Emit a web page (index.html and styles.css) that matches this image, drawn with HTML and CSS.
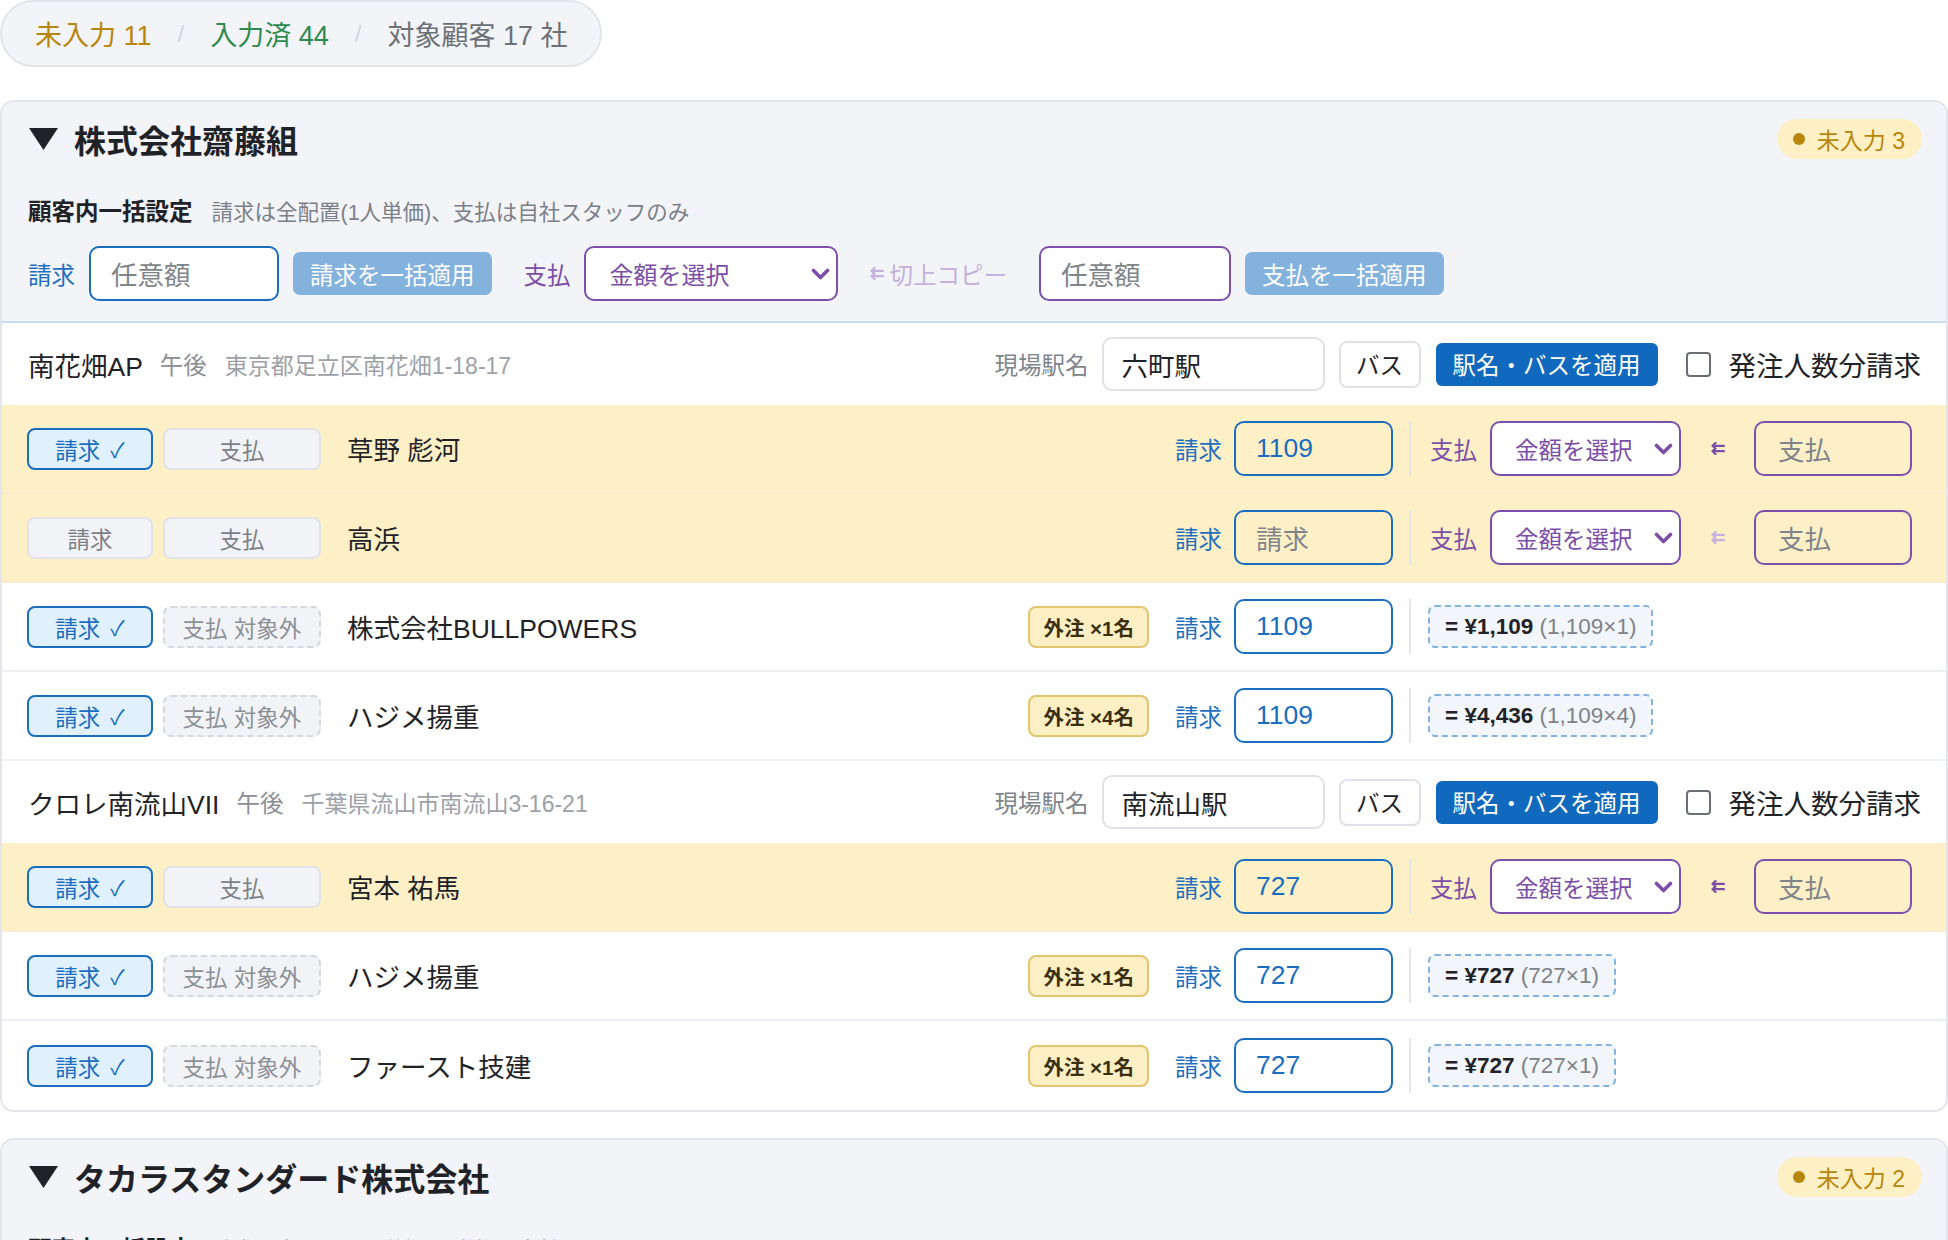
FILE: index.html
```html
<!DOCTYPE html>
<html lang="ja">
<head>
<meta charset="utf-8">
<title>請求・支払入力</title>
<link rel="stylesheet" href="styles.css">
</head>
<body>
<div class="page">
  <div class="summary">
    <span class="sum-pending">未入力 11</span>
    <span class="sum-sep">/</span>
    <span class="sum-done">入力済 44</span>
    <span class="sum-sep">/</span>
    <span class="sum-total">対象顧客 17 社</span>
  </div>

  <section class="customer">
    <div class="cust-head">
      <div class="cust-title-row">
        <h2 class="cust-title"><svg class="tri" width="29" height="22" viewBox="0 0 29 22"><polygon points="0,0 29,0 14.5,22"/></svg>株式会社齋藤組</h2>
        <span class="pending-badge"><span class="dot"></span>未入力 3</span>
      </div>
      <div class="bulk-caption"><b>顧客内一括設定</b><span>請求は全配置(1人単価)、支払は自社スタッフのみ</span></div>
      <div class="bulk-controls">
        <div class="bulk-group">
          <span class="lbl bill">請求</span>
          <div class="field bill-field bulk-field"><span class="ph">任意額</span></div>
          <button class="btn-soft">請求を一括適用</button>
        </div>
        <div class="bulk-group tight">
          <span class="lbl pay">支払</span>
          <div class="select bulk-select"><span>金額を選択</span><svg class="chev" width="19" height="12" viewBox="0 0 19 12"><path d="M2.5 2.5 L9.5 9.5 L16.5 2.5"/></svg></div>
        </div>
        <span class="copy-up"><svg class="dbl" width="14" height="13" viewBox="0 0 14 13"><path d="M4.5 1 L1.5 3.8 L4.5 6.6 M1.5 3.8 H13 M4.5 6.4 L1.5 9.2 L4.5 12 M1.5 9.2 H13"/></svg>切上コピー</span>
        <div class="bulk-group">
          <div class="field pay-field bulk-field"><span class="ph">任意額</span></div>
          <button class="btn-soft">支払を一括適用</button>
        </div>
      </div>
    </div>

    <div class="site-row">
      <span class="site-name">南花畑AP</span>
      <span class="site-time">午後</span>
      <span class="site-addr">東京都足立区南花畑1-18-17</span>
      <div class="site-tools">
        <span class="site-lbl">現場駅名</span>
        <div class="station">六町駅</div>
        <button class="btn-bus">バス</button>
        <button class="btn-apply">駅名・バスを適用</button>
        <label class="chk"><span class="box"></span>発注人数分請求</label>
      </div>
    </div>

    <div class="worker pending">
      <span class="toggle bill on">請求<span class="tick">✓</span></span>
      <span class="toggle pay">支払</span>
      <span class="worker-name">草野 彪河</span>
      <span class="lbl bill">請求</span>
      <div class="amount">1109</div>
      <span class="vsep"></span>
      <div class="pay-part">
        <span class="lbl pay">支払</span>
        <div class="select row-select"><span>金額を選択</span><svg class="chev" width="19" height="12" viewBox="0 0 19 12"><path d="M2.5 2.5 L9.5 9.5 L16.5 2.5"/></svg></div>
        <span class="copy-arrow"><svg class="dbl" width="14" height="13" viewBox="0 0 14 13"><path d="M4.5 1 L1.5 3.8 L4.5 6.6 M1.5 3.8 H13 M4.5 6.4 L1.5 9.2 L4.5 12 M1.5 9.2 H13"/></svg></span>
        <div class="payin"><span class="ph">支払</span></div>
      </div>
    </div>

    <div class="worker pending">
      <span class="toggle bill">請求</span>
      <span class="toggle pay">支払</span>
      <span class="worker-name">高浜</span>
      <span class="lbl bill">請求</span>
      <div class="amount"><span class="ph">請求</span></div>
      <span class="vsep"></span>
      <div class="pay-part">
        <span class="lbl pay">支払</span>
        <div class="select row-select"><span>金額を選択</span><svg class="chev" width="19" height="12" viewBox="0 0 19 12"><path d="M2.5 2.5 L9.5 9.5 L16.5 2.5"/></svg></div>
        <span class="copy-arrow dim"><svg class="dbl" width="14" height="13" viewBox="0 0 14 13"><path d="M4.5 1 L1.5 3.8 L4.5 6.6 M1.5 3.8 H13 M4.5 6.4 L1.5 9.2 L4.5 12 M1.5 9.2 H13"/></svg></span>
        <div class="payin"><span class="ph">支払</span></div>
      </div>
    </div>

    <div class="worker">
      <span class="toggle bill on">請求<span class="tick">✓</span></span>
      <span class="toggle pay off">支払 対象外</span>
      <span class="worker-name">株式会社BULLPOWERS</span>
      <span class="outsource">外注 ×1名</span>
      <span class="lbl bill">請求</span>
      <div class="amount">1109</div>
      <span class="vsep"></span>
      <div class="pay-part">
        <span class="result"><b>= ¥1,109</b> (1,109×1)</span>
      </div>
    </div>

    <div class="worker">
      <span class="toggle bill on">請求<span class="tick">✓</span></span>
      <span class="toggle pay off">支払 対象外</span>
      <span class="worker-name">ハジメ揚重</span>
      <span class="outsource">外注 ×4名</span>
      <span class="lbl bill">請求</span>
      <div class="amount">1109</div>
      <span class="vsep"></span>
      <div class="pay-part">
        <span class="result"><b>= ¥4,436</b> (1,109×4)</span>
      </div>
    </div>

    <div class="site-row">
      <span class="site-name">クロレ南流山VII</span>
      <span class="site-time">午後</span>
      <span class="site-addr">千葉県流山市南流山3-16-21</span>
      <div class="site-tools">
        <span class="site-lbl">現場駅名</span>
        <div class="station">南流山駅</div>
        <button class="btn-bus">バス</button>
        <button class="btn-apply">駅名・バスを適用</button>
        <label class="chk"><span class="box"></span>発注人数分請求</label>
      </div>
    </div>

    <div class="worker pending">
      <span class="toggle bill on">請求<span class="tick">✓</span></span>
      <span class="toggle pay">支払</span>
      <span class="worker-name">宮本 祐馬</span>
      <span class="lbl bill">請求</span>
      <div class="amount">727</div>
      <span class="vsep"></span>
      <div class="pay-part">
        <span class="lbl pay">支払</span>
        <div class="select row-select"><span>金額を選択</span><svg class="chev" width="19" height="12" viewBox="0 0 19 12"><path d="M2.5 2.5 L9.5 9.5 L16.5 2.5"/></svg></div>
        <span class="copy-arrow"><svg class="dbl" width="14" height="13" viewBox="0 0 14 13"><path d="M4.5 1 L1.5 3.8 L4.5 6.6 M1.5 3.8 H13 M4.5 6.4 L1.5 9.2 L4.5 12 M1.5 9.2 H13"/></svg></span>
        <div class="payin"><span class="ph">支払</span></div>
      </div>
    </div>

    <div class="worker">
      <span class="toggle bill on">請求<span class="tick">✓</span></span>
      <span class="toggle pay off">支払 対象外</span>
      <span class="worker-name">ハジメ揚重</span>
      <span class="outsource">外注 ×1名</span>
      <span class="lbl bill">請求</span>
      <div class="amount">727</div>
      <span class="vsep"></span>
      <div class="pay-part">
        <span class="result"><b>= ¥727</b> (727×1)</span>
      </div>
    </div>

    <div class="worker">
      <span class="toggle bill on">請求<span class="tick">✓</span></span>
      <span class="toggle pay off">支払 対象外</span>
      <span class="worker-name">ファースト技建</span>
      <span class="outsource">外注 ×1名</span>
      <span class="lbl bill">請求</span>
      <div class="amount">727</div>
      <span class="vsep"></span>
      <div class="pay-part">
        <span class="result"><b>= ¥727</b> (727×1)</span>
      </div>
    </div>
  </section>

  <section class="customer next">
    <div class="cust-head">
      <div class="cust-title-row">
        <h2 class="cust-title"><svg class="tri" width="29" height="22" viewBox="0 0 29 22"><polygon points="0,0 29,0 14.5,22"/></svg>タカラスタンダード株式会社</h2>
        <span class="pending-badge"><span class="dot"></span>未入力 2</span>
      </div>
      <div class="bulk-caption"><b>顧客内一括設定</b><span>請求は全配置(1人単価)、支払は自社スタッフのみ</span></div>
      <div class="bulk-controls">
        <div class="bulk-group">
          <span class="lbl bill">請求</span>
          <div class="field bill-field bulk-field"><span class="ph">任意額</span></div>
          <button class="btn-soft">請求を一括適用</button>
        </div>
      </div>
    </div>
  </section>
</div>
</body>
</html>
```

FILE: styles.css
```css
* { box-sizing: border-box; }

html, body {
  margin: 0;
  padding: 0;
  overflow: hidden;
  background: #ffffff;
}

body {
  font-family: "Liberation Sans", "Noto Sans CJK JP", sans-serif;
  color: #1f2328;
}

.page {
  width: 1948px;
}

/* ---------- summary pill ---------- */
.summary {
  display: inline-flex;
  align-items: center;
  height: 67px;
  padding: 0 33px 0 33px;
  border: 2px solid #e3e5ea;
  border-radius: 34px;
  background: #f2f4f8;
  font-size: 27px;
}
.sum-sep { color: #d3d6db; margin: 0 26px; font-size: 24px; }
.sum-pending { color: #b8860b; }
.sum-done { color: #2f8a50; }
.sum-total { color: #6c7177; }

/* ---------- customer card ---------- */
.customer {
  margin-top: 33px;
  border: 2px solid #e3e5ea;
  border-radius: 14px;
  overflow: hidden;
  background: #ffffff;
}
.customer.next { margin-top: 26px; }

.cust-head {
  background: #f2f4f8;
  border-bottom: 2px solid #c8dcf0;
  padding: 17px 24px 20px 26px;
}

.cust-title-row {
  display: flex;
  align-items: center;
  justify-content: space-between;
  height: 40px;
}
.cust-title {
  margin: 0 0 0 1px;
  display: flex;
  align-items: center;
  gap: 16px;
  font-size: 32px;
  font-weight: 700;
  color: #1f2328;
}
.tri { fill: #1f2328; }

.pending-badge {
  display: inline-flex;
  align-items: center;
  gap: 12px;
  height: 40px;
  padding: 0 17px 0 16px;
  border-radius: 20px;
  background: #fdf0c4;
  color: #b8860b;
  font-size: 23px;
}
.pending-badge .dot {
  width: 12px;
  height: 12px;
  border-radius: 50%;
  background: #b8860b;
}

.bulk-caption {
  margin-top: 38px;
  display: flex;
  align-items: baseline;
  gap: 19px;
  line-height: 30px;
}
.bulk-caption b { font-size: 23.5px; font-weight: 700; color: #1f2328; }
.bulk-caption span { font-size: 21.5px; color: #7b8088; }

.bulk-controls {
  margin-top: 18px;
  display: flex;
  align-items: center;
  gap: 32px;
  height: 55px;
}
.bulk-group {
  display: flex;
  align-items: center;
  gap: 14px;
}
.bulk-group.tight { gap: 13px; }

/* ---------- common controls ---------- */
.lbl { font-size: 23.5px; white-space: nowrap; }
.lbl.bill { color: #1f6fbf; }
.lbl.pay { color: #7b4fa8; }

.ph { color: #80858c; }

.field {
  display: flex;
  align-items: center;
  height: 55px;
  border-radius: 10px;
  background: #ffffff;
  padding-left: 20px;
  font-size: 26.5px;
}
.bulk-field { width: 190px; }
.bill-field { border: 2px solid #1a6dbf; }
.pay-field { border: 2px solid #7d4fad; width: 192px; }

.btn-soft {
  height: 43px;
  padding: 0 17px;
  border: none;
  border-radius: 7px;
  background: #83b2dd;
  color: #ffffff;
  font-family: inherit;
  font-size: 23.5px;
}

.select {
  display: flex;
  align-items: center;
  justify-content: space-between;
  height: 55px;
  border: 2px solid #7d4fad;
  border-radius: 10px;
  background: #ffffff;
  color: #7b4fa8;
  font-size: 24px;
}
.bulk-select { width: 254px; padding: 0 6px 0 24px; }
.row-select { width: 191px; margin-left: 13px; padding: 0 6px 0 23px; font-size: 23.5px; }

.chev {
  fill: none;
  stroke: #7b4fa8;
  stroke-width: 3.6;
  stroke-linecap: round;
  stroke-linejoin: round;
}

.copy-up {
  display: flex;
  align-items: center;
  gap: 6px;
  color: #c4b1dd;
  font-size: 23.5px;
}
.dbl {
  fill: none;
  stroke: currentColor;
  stroke-width: 2.2;
  stroke-linecap: round;
  stroke-linejoin: round;
}

/* ---------- site row ---------- */
.site-row {
  display: flex;
  align-items: center;
  height: 82px;
  padding: 0 25px 0 26px;
  background: #ffffff;
}
.site-name { font-size: 26.5px; color: #1f2328; }
.site-time { font-size: 23.5px; color: #8a8f96; margin-left: 17px; }
.site-addr { font-size: 23px; color: #9da1a8; margin-left: 18px; }

.site-tools {
  margin-left: auto;
  display: flex;
  align-items: center;
}
.site-lbl { font-size: 23.5px; color: #80858c; }
.station {
  display: flex;
  align-items: center;
  width: 223px;
  height: 54px;
  margin-left: 13px;
  padding-left: 18px;
  border: 2px solid #e0e2e7;
  border-radius: 10px;
  background: #ffffff;
  font-size: 26.5px;
  color: #1f2328;
}
.btn-bus {
  width: 82px;
  height: 47px;
  margin-left: 14px;
  border: 2px solid #e0e2e7;
  border-radius: 8px;
  background: #ffffff;
  color: #1f2328;
  font-family: inherit;
  font-size: 23.5px;
  padding: 0;
}
.btn-apply {
  height: 43px;
  margin-left: 15px;
  padding: 0 17px;
  border: none;
  border-radius: 6px;
  background: #1169bd;
  color: #ffffff;
  font-family: inherit;
  font-size: 23.5px;
}
.chk {
  display: flex;
  align-items: center;
  gap: 18px;
  margin-left: 28px;
  font-size: 27.5px;
  color: #1f2328;
}
.chk .box {
  width: 25px;
  height: 25px;
  border: 2px solid #6b6f75;
  border-radius: 4px;
  background: #ffffff;
}

/* ---------- worker rows ---------- */
.worker {
  display: flex;
  align-items: center;
  height: 89px;
  padding: 0 34px 0 25px;
  border-bottom: 2px solid #eef0f3;
  background: #ffffff;
}
.worker:last-child { border-bottom: none; }
.worker.pending {
  background: #fef0c6;
  border-bottom-color: #fbeccd;
}

.toggle {
  display: flex;
  align-items: center;
  justify-content: center;
  height: 42px;
  border: 2px solid #e1e3e8;
  border-radius: 8px;
  background: #f2f3f7;
  color: #7b8087;
  font-size: 22.5px;
  white-space: nowrap;
}
.toggle .tick { margin-left: 10px; font-size: 21px; }
.toggle.bill { width: 126px; }
.toggle.pay { width: 158px; margin-left: 10px; }
.toggle.on {
  border-color: #1a6dbf;
  background: #e0f1fd;
  color: #1a6dbf;
}
.toggle.off {
  border-style: dashed;
  border-color: #d5d8dd;
  color: #8b9096;
}

.worker-name {
  flex: 1;
  margin-left: 26px;
  font-size: 26.5px;
  color: #1f2328;
}

.outsource {
  display: flex;
  align-items: center;
  height: 42px;
  margin-right: 26px;
  padding: 0 13px;
  border: 2px solid #e3c46f;
  border-radius: 8px;
  background: #fdefc4;
  color: #3b2f10;
  font-size: 20.5px;
  font-weight: 700;
  white-space: nowrap;
}

.amount {
  display: flex;
  align-items: center;
  width: 159px;
  height: 55px;
  margin-left: 12px;
  padding-left: 20px;
  border: 2px solid #1a6dbf;
  border-radius: 10px;
  font-size: 26.5px;
  color: #1a6dbf;
}

.vsep {
  width: 2px;
  height: 55px;
  margin: 0 17px 0 16px;
  background: #e4e6ea;
}

.pay-part {
  display: flex;
  align-items: center;
  width: 484px;
}
.pay-part > .lbl.pay { margin-left: 2px; }

.copy-arrow {
  flex: 1;
  display: flex;
  justify-content: center;
  color: #7b4fa8;
}
.copy-arrow.dim { color: #c4b1dd; }

.payin {
  display: flex;
  align-items: center;
  width: 158px;
  height: 55px;
  padding-left: 22px;
  border: 2px solid #7d4fad;
  border-radius: 10px;
  font-size: 26.5px;
}

.result {
  display: flex;
  align-items: center;
  height: 43px;
  padding: 0 15px;
  border: 2px dashed #84b3e0;
  border-radius: 7px;
  background: #f2f5fa;
  color: #7d8288;
  font-size: 22.5px;
  white-space: pre;
}
.result b { color: #1f2328; font-weight: 700; }
```
